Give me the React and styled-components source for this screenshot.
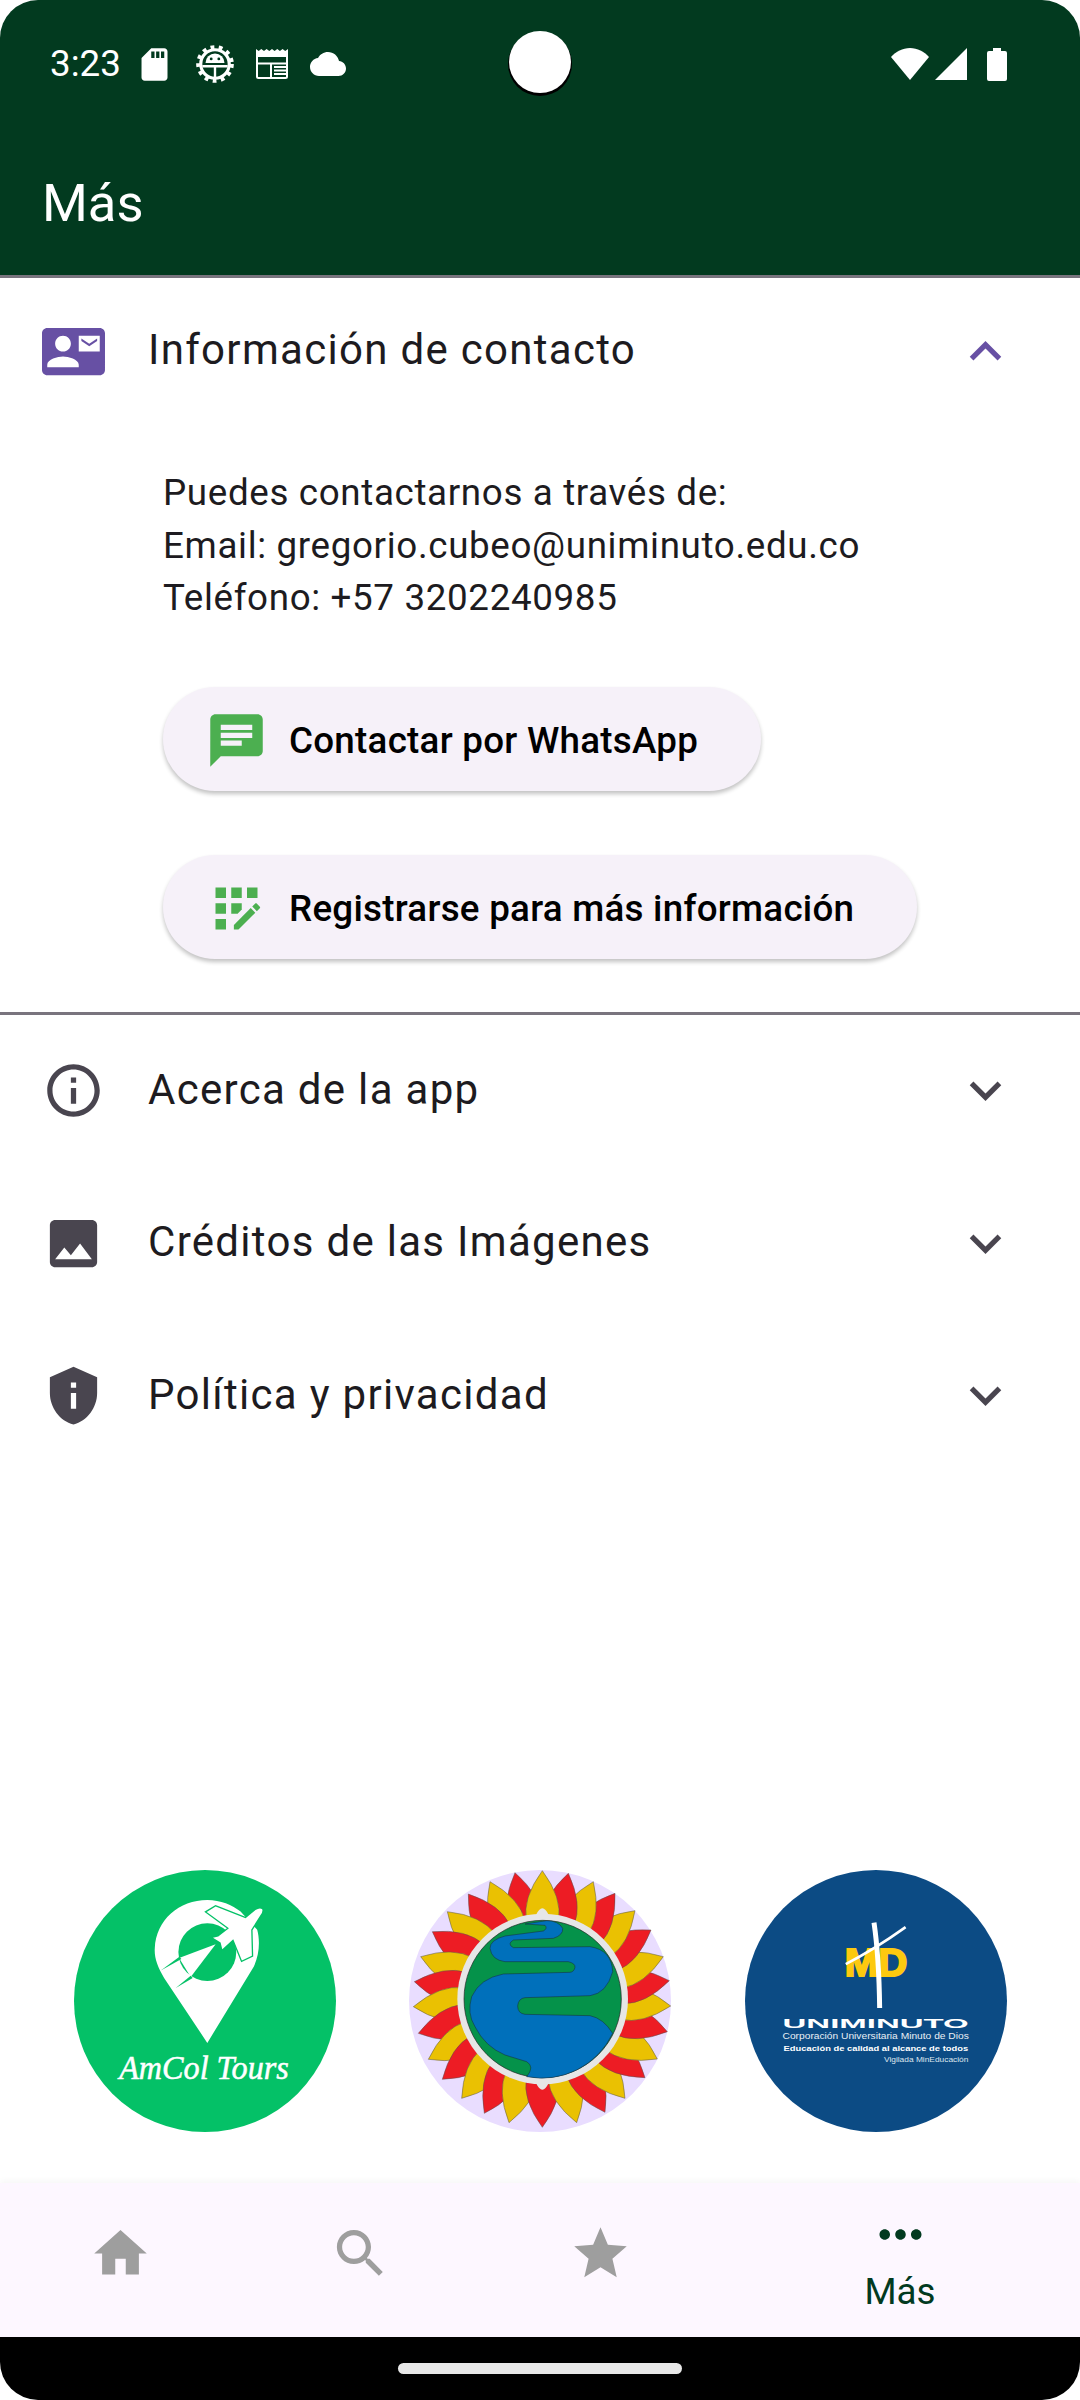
import React from 'react'
import styled, { createGlobalStyle } from 'styled-components'

const GlobalStyle = createGlobalStyle`
  html, body {
    margin: 0;
    padding: 0;
    background: #fff;
    font-family: Roboto, "Liberation Sans", sans-serif;
  }
`

const Screen = styled.div`
  position: relative;
  width: 1080px;
  height: 2400px;
  display: flex;
  flex-direction: column;
  background: #fff;
  border-radius: 38px;
  overflow: hidden;
`
const Header = styled.header`
  background: #023a1f;
  color: #fff;
`
const StatusBar = styled.div`
  height: 129px;
  box-sizing: border-box;
  padding: 45px 73px 0 50px;
  display: flex;
  justify-content: space-between;
  align-items: flex-start;
`
const StatusGroup = styled.div`
  display: flex;
  align-items: center;
  gap: ${(p) => p.$gap}px;
  height: 38px;
`
const Time = styled.span`
  font-size: 36.75px;
  line-height: 38px;
  margin-right: -8px;
`
const Camera = styled.div`
  position: absolute;
  left: 509px;
  top: 31px;
  width: 62px;
  height: 62px;
  border-radius: 50%;
  background: #fff;
  box-shadow: 0 2px 0 1px #000;
`
const AppBar = styled.div`
  height: 147px;
  display: flex;
  align-items: center;
  padding-left: 42px;
  font-size: 52.5px;
`
const Section = styled.section`
  border-top: 3px solid ${(p) => (p.$open ? '#79747e' : 'transparent')};
  border-bottom: 3px solid ${(p) => (p.$open ? '#79747e' : 'transparent')};
  margin-top: ${(p) => (p.$open ? -1 : 0)}px;
`
const TileRow = styled.div`
  height: ${(p) => (p.$open ? 146 : 146.5)}px;
  display: flex;
  align-items: center;
  padding: 0 63px 0 42px;
  color: ${(p) => (p.$open ? '#6750a4' : '#49454f')};
`
const TileTitle = styled.span`
  flex: 1;
  margin: 0 0 3px 43px;
  font-size: 42px;
  letter-spacing: 1.3px;
  color: #1d1b20;
`
const TileBody = styled.div`
  padding: 43px 0 53px 163px;
  display: flex;
  flex-direction: column;
  align-items: flex-start;
  gap: 64px;
`
const ContactText = styled.p`
  margin: 0 0 -2px;
  font-size: 36.75px;
  line-height: 52.5px;
  letter-spacing: 0.65px;
  color: #1d1b20;
`
const PillButton = styled.div`
  height: 104px;
  box-sizing: border-box;
  padding: 3px 63px 0 42px;
  display: flex;
  align-items: center;
  gap: 21px;
  border-radius: 52px;
  background: #f6f1f9;
  box-shadow: 0 3px 4px rgba(0, 0, 0, 0.24);
  color: #000;
  font-size: 36.75px;
  font-weight: 500;
  letter-spacing: 0.26px;
`
const ButtonIcon = styled.span`
  display: flex;
  color: #4caf50;
`
const Spacer = styled.div`
  flex: 1;
`
const LogoRow = styled.div`
  display: flex;
  justify-content: space-evenly;
  padding-bottom: 51px;
`
const BottomNav = styled.nav`
  height: 154px;
  display: grid;
  grid-template-columns: 2fr 2fr 2fr 3fr;
  background: #fdf7ff;
  box-shadow: 0 -2px 6px rgba(0, 0, 0, 0.04);
`
const NavItem = styled.div`
  display: flex;
  flex-direction: column;
  align-items: center;
  box-sizing: border-box;
  padding-top: ${(p) => (p.$active ? 20 : 39)}px;
  color: ${(p) => (p.$active ? '#023a1f' : '#9e9e9e')};
`
const NavLabel = styled.span`
  font-size: 36.75px;
  line-height: 44px;
  margin-top: 4px;
`
const GestureBar = styled.div`
  height: 63px;
  background: #000;
  display: flex;
  justify-content: center;
  padding-top: 26px;
  box-sizing: border-box;
`
const HomeIndicator = styled.div`
  width: 284px;
  height: 11px;
  border-radius: 6px;
  background: #e8e8e8;
`
const SignalGap = styled.span`
  width: 8px;
`

const Icon = ({ d, size = 63, children }) => (
  <svg width={size} height={size} viewBox="0 0 24 24" fill="currentColor" style={{ flexShrink: 0 }}>
    {d && <path d={d} />}
    {children}
  </svg>
)

const paths = {
  sd: 'M18 2h-8L4.02 8 4 20c0 1.1.9 2 2 2h12c1.1 0 2-.9 2-2V4c0-1.1-.9-2-2-2zm-6 6h-2V4h2v4zm3 0h-2V4h2v4zm3 0h-2V4h2v4z',
  cloud: 'M19.35 10.04C18.67 6.59 15.64 4 12 4 9.11 4 6.6 5.64 5.35 8.04 2.34 8.36 0 10.91 0 14c0 3.31 2.69 6 6 6h13c2.76 0 5-2.24 5-5 0-2.64-2.05-4.78-4.65-4.96z',
  contact: 'M21 8V7l-3 2-3-2v1l3 2 3-2zm1-5H2C.9 3 0 3.9 0 5v14c0 1.1.9 2 2 2h20c1.1 0 1.99-.9 1.99-2L24 5c0-1.1-.9-2-2-2zM8 6c1.66 0 3 1.34 3 3s-1.34 3-3 3-3-1.34-3-3 1.34-3 3-3zm6 12H2v-1c0-2 4-3.1 6-3.1s6 1.1 6 3.1v1zm8-6h-8V6h8v6z',
  less: 'M12 8l-6 6 1.41 1.41L12 10.83l4.59 4.58L18 14z',
  more: 'M16.59 8.59L12 13.17 7.41 8.59 6 10l6 6 6-6z',
  info: 'M11 7h2v2h-2zm0 4h2v6h-2zm1-9C6.48 2 2 6.48 2 12s4.48 10 10 10 10-4.48 10-10S17.52 2 12 2zm0 18c-4.41 0-8-3.59-8-8s3.59-8 8-8 8 3.59 8 8-3.59 8-8 8z',
  photo: 'M21 19V5c0-1.1-.9-2-2-2H5c-1.1 0-2 .9-2 2v14c0 1.1.9 2 2 2h14c1.1 0 2-.9 2-2zM8.5 13.5l2.5 3.01L14.5 12l4.5 6H5l3.5-4.5z',
  shield: 'M12 1L3 5v6c0 5.55 3.84 10.74 9 12 5.16-1.26 9-6.45 9-12V5l-9-4zm-1 6h2v2h-2V7zm0 4h2v6h-2v-6z',
  chat: 'M20 2H4c-1.1 0-1.99.9-1.99 2L2 22l4-4h14c1.1 0 2-.9 2-2V4c0-1.1-.9-2-2-2zM6 9h12v2H6V9zm8 5H6v-2h8v2zm4-6H6V6h12v2z',
  home: 'M10 20v-6h4v6h5v-8h3L12 3 2 12h3v8z',
  search: 'M15.5 14h-.79l-.28-.27C15.41 12.59 16 11.11 16 9.5 16 5.91 13.09 3 9.5 3S3 5.91 3 9.5 5.91 16 9.5 16c1.61 0 3.09-.59 4.23-1.57l.27.28v.79l5 4.99L20.49 19l-4.99-5zm-6 0C7.01 14 5 11.99 5 9.5S7.01 5 9.5 5 14 7.01 14 9.5 11.99 14 9.5 14z',
  star: 'M12 17.27L18.18 21l-1.64-7.03L22 9.24l-7.19-.61L12 2 9.19 8.63 2 9.24l5.46 4.73L5.82 21z',
  dots: 'M6 10c-1.1 0-2 .9-2 2s.9 2 2 2 2-.9 2-2-.9-2-2-2zm12 0c-1.1 0-2 .9-2 2s.9 2 2 2 2-.9 2-2-.9-2-2-2zm-6 0c-1.1 0-2 .9-2 2s.9 2 2 2 2-.9 2-2-.9-2-2-2z',
}

const GearBug = () => (
  <svg width="38" height="38" viewBox="0 0 24 24" style={{ flexShrink: 0 }}>
    <circle cx="12" cy="12" r="10.6" fill="none" stroke="#fff" strokeWidth="2.6" strokeDasharray="2.4 2.8" />
    <circle cx="12" cy="12" r="9" fill="none" stroke="#fff" strokeWidth="2" />
    <path d="M6 11.4a6 6 0 0 1 12 0z" fill="#fff" />
    <circle cx="9.6" cy="8.8" r="0.9" fill="#023a1f" />
    <circle cx="14.4" cy="8.8" r="0.9" fill="#023a1f" />
    <path d="M4 13.4h16M12 13.4V21" stroke="#fff" strokeWidth="1.5" />
  </svg>
)

const Newspaper = () => (
  <svg width="32" height="30" viewBox="0 0 32 30" style={{ flexShrink: 0 }}>
    <path d="M0 0l2.7 2 2.6-2 2.7 2 2.6-2 2.7 2 2.7-2 2.6 2 2.7-2 2.6 2 2.7-2 2.6 2L32 0v8H0z" fill="#fff" />
    <rect x="1" y="4" width="30" height="25" rx="1.5" fill="none" stroke="#fff" strokeWidth="2" />
    <path d="M2 14.5h28M15 14.5V28" stroke="#fff" strokeWidth="2" />
    <path d="M18 18h12M18 21.5h12M18 25h12" stroke="#fff" strokeWidth="1.8" />
  </svg>
)

const Wifi = () => (
  <svg width="38" height="32" viewBox="0 0 38 32" style={{ flexShrink: 0 }}>
    <path d="M19 32L0 9C5 3.5 11.5 0 19 0s14 3.5 19 9z" fill="#fff" />
  </svg>
)
const Signal = () => (
  <svg width="32" height="32" viewBox="0 0 32 32" style={{ flexShrink: 0 }}>
    <path d="M32 0v32H0z" fill="#fff" />
  </svg>
)
const Battery = () => (
  <svg width="20" height="33" viewBox="0 0 20 33" style={{ flexShrink: 0 }}>
    <path d="M6 0h8v3h4a2 2 0 0 1 2 2v26a2 2 0 0 1-2 2H2a2 2 0 0 1-2-2V5a2 2 0 0 1 2-2h4z" fill="#fff" />
  </svg>
)

const AppRegistration = () => (
  <Icon>
    <rect x="10" y="4" width="4" height="4" />
    <rect x="4" y="16" width="4" height="4" />
    <rect x="4" y="10" width="4" height="4" />
    <rect x="4" y="4" width="4" height="4" />
    <rect x="16" y="4" width="4" height="4" />
    <polygon points="14,12.42 14,10 10,10 10,14 12.42,14" />
    <path d="M20.88 11.29l-1.17-1.17c-.16-.16-.42-.16-.58 0L18 11.25 19.75 13l1.13-1.13c.16-.16.16-.42 0-.58z" />
    <polygon points="11,18.25 11,20 12.75,20 19.16,13.59 17.41,11.84" />
  </Icon>
)

const AmColLogo = () => (
  <svg width="262" height="262" viewBox="69 60 788 788">
    <circle cx="463" cy="454" r="394" fill="#04c167" />
    <path d="M470 580L340 385C320 350 310 325 312 295C316 210 385 150 470 150C510 150 545 165 570 185L620 240C628 270 628 310 610 350Z" fill="#fff" />
    <circle cx="470" cy="307" r="87" fill="#04c167" />
    <path d="M495 283L385 325L420 382Z" fill="#fff" />
    <path d="M330 362L386 321L392 328Z" fill="#04c167" />
    <path d="M375 415L420 378L426 385Z" fill="#04c167" />
    <path
      d="M635 178Q628 172 615 180L585 205L495 170L468 186L535 235L503 260L487 264L510 278L515 298L548 268L574 332L604 318L602 240L630 195Q638 185 635 178Z"
      fill="#fff"
      stroke="#04c167"
      strokeWidth="8"
      paintOrder="stroke"
    />
    <text x="205" y="688" fill="#fff" stroke="#fff" strokeWidth="1.5" fontFamily="'Liberation Serif', serif" fontStyle="italic" fontSize="100" textLength="510" lengthAdjust="spacingAndGlyphs">
      AmCol Tours
    </text>
  </svg>
)

// clockwise from the top petal, each one lying over the next
const petalTips = [
  [457, 62], [535, 70], [610, 95], [675, 130], [735, 182], [783, 240], [820, 320], [838, 392], [842, 468], [832, 545],
  [802, 627], [765, 683], [705, 745], [645, 787], [560, 818], [457, 832], [357, 818], [283, 790], [215, 745], [157, 688],
  [115, 628], [85, 550], [70, 470], [73, 395], [92, 320], [127, 245], [172, 185], [235, 132], [300, 95], [375, 68],
]

const petalPath = ([tx, ty]) => {
  const cx = 458
  const cy = 447
  const angle = Math.atan2(ty - cy, tx - cx)
  const tipR = Math.hypot(tx - cx, ty - cy)
  const at = (a, r) => `${(cx + Math.cos(a) * r).toFixed(1)} ${(cy + Math.sin(a) * r).toFixed(1)}`
  const spread = 0.2
  return `M${at(angle - spread, 240)}Q${at(angle - spread, tipR * 0.8)} ${at(angle, tipR)}Q${at(angle + spread, tipR * 0.8)} ${at(angle + spread, 240)}Z`
}

const SunLogo = () => (
  <svg width="262" height="262" viewBox="57 60 786 786">
    <circle cx="450" cy="453" r="393" fill="#e9ddff" />
    {petalTips.map((tip, i) => ({ tip, i })).reverse().map(({ tip, i }) => (
      <path key={i} d={petalPath(tip)} fill={i % 2 === 0 ? '#eac102' : '#ed1c24'} stroke="#555" strokeWidth="1.5" />
    ))}
    <path d="M438 195Q457 155 476 195Z" fill="#e6e6e6" />
    <path d="M438 699Q457 739 476 699Z" fill="#e6e6e6" />
    <circle cx="458" cy="447" r="256" fill="#e6e6e6" />
    <circle cx="458" cy="447" r="236" fill="#05924a" stroke="#222" strokeWidth="2" />
    <path
      d="M405 222L465 226Q474 235 460 243L345 258Q300 270 300 295Q305 330 345 335L535 335Q556 340 555 352Q552 366 540 367L340 372Q270 385 245 440Q230 490 255 530Q285 590 345 615L410 635Q435 650 410 680A235 235 0 0 0 668 550Q640 505 600 497L405 493Q383 490 383 468Q385 445 405 443L600 437Q650 430 668 365Q665 300 600 290L370 293Q350 282 370 270L490 265Q520 255 518 235Q505 212 470 212Z"
      fill="#0070bb"
      stroke="#1a2a33"
      strokeWidth="1.5"
    />
  </svg>
)

const UniminutoLogo = () => (
  <svg width="262" height="262" viewBox="42 60 788 788">
    <circle cx="436" cy="454" r="394" fill="#0c4b84" />
    <text x="342" y="378" fill="#fdc90f" stroke="#fdc90f" strokeWidth="6" fontFamily="'Liberation Sans', sans-serif" fontWeight="700" fontSize="116" textLength="188" lengthAdjust="spacingAndGlyphs">
      MD
    </text>
    <path d="M345 343Q430 300 525 232" stroke="#fff" strokeWidth="8" fill="none" />
    <path d="M430 218Q445 320 447 475" stroke="#fff" strokeWidth="15" fill="none" />
    <text x="155" y="534" fill="#fff" fontFamily="'Liberation Sans', sans-serif" fontWeight="700" fontSize="40" textLength="560" lengthAdjust="spacingAndGlyphs">
      UNIMINUTO
    </text>
    <text x="155" y="568" fill="#e8eef4" fontFamily="'Liberation Sans', sans-serif" fontSize="26" textLength="560" lengthAdjust="spacingAndGlyphs">
      Corporación Universitaria Minuto de Dios
    </text>
    <text x="158" y="603" fill="#fff" fontFamily="'Liberation Sans', sans-serif" fontWeight="700" fontSize="24" textLength="555" lengthAdjust="spacingAndGlyphs">
      Educación de calidad al alcance de todos
    </text>
    <text x="460" y="637" fill="#dfe7ef" fontFamily="'Liberation Sans', sans-serif" fontSize="20" textLength="254" lengthAdjust="spacingAndGlyphs">
      Vigilada MinEducación
    </text>
  </svg>
)

const tiles = [
  { title: 'Acerca de la app', icon: paths.info },
  { title: 'Créditos de las Imágenes', icon: paths.photo },
  { title: 'Política y privacidad', icon: paths.shield },
]

export default function App() {
  return (
    <Screen>
      <GlobalStyle />
      <Header>
        <StatusBar>
          <StatusGroup $gap={22}>
            <Time>3:23</Time>
            <Icon d={paths.sd} size={39} />
            <GearBug />
            <Newspaper />
            <Icon d={paths.cloud} size={36} />
          </StatusGroup>
          <StatusGroup $gap={6}>
            <Wifi />
            <Signal />
            <SignalGap />
            <Battery />
          </StatusGroup>
        </StatusBar>
        <AppBar>Más</AppBar>
      </Header>
      <Camera />

      <Section $open>
        <TileRow $open>
          <Icon d={paths.contact} />
          <TileTitle>Información de contacto</TileTitle>
          <Icon d={paths.less} />
        </TileRow>
        <TileBody>
          <ContactText>
            Puedes contactarnos a través de:
            <br />
            Email: gregorio.cubeo@uniminuto.edu.co
            <br />
            Teléfono: +57 3202240985
          </ContactText>
          <PillButton>
            <ButtonIcon>
              <Icon d={paths.chat} />
            </ButtonIcon>
            Contactar por WhatsApp
          </PillButton>
          <PillButton>
            <ButtonIcon>
              <AppRegistration />
            </ButtonIcon>
            Registrarse para más información
          </PillButton>
        </TileBody>
      </Section>

      {tiles.map((tile) => (
        <Section key={tile.title}>
          <TileRow>
            <Icon d={tile.icon} />
            <TileTitle>{tile.title}</TileTitle>
            <Icon d={paths.more} />
          </TileRow>
        </Section>
      ))}

      <Spacer />
      <LogoRow>
        <AmColLogo />
        <SunLogo />
        <UniminutoLogo />
      </LogoRow>

      <BottomNav>
        <NavItem>
          <Icon d={paths.home} />
        </NavItem>
        <NavItem>
          <Icon d={paths.search} />
        </NavItem>
        <NavItem>
          <Icon d={paths.star} />
        </NavItem>
        <NavItem $active>
          <Icon d={paths.dots} />
          <NavLabel>Más</NavLabel>
        </NavItem>
      </BottomNav>
      <GestureBar>
        <HomeIndicator />
      </GestureBar>
    </Screen>
  )
}
